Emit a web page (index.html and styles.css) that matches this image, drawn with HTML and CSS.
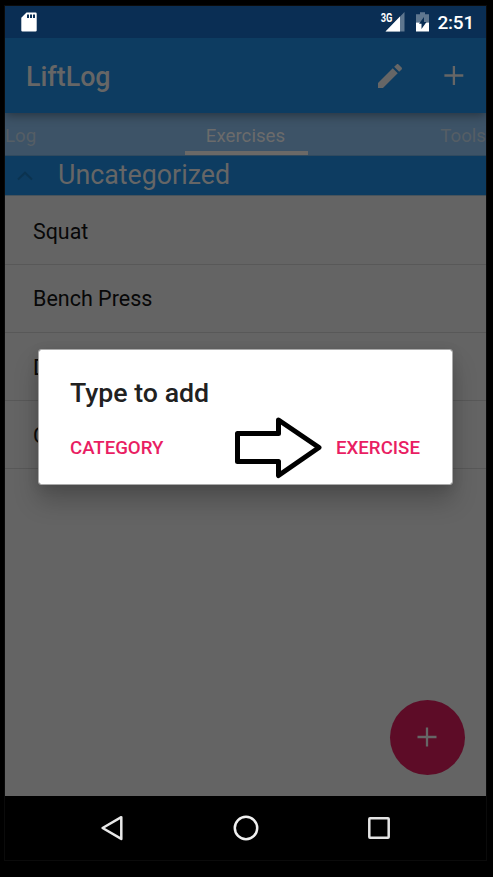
FILE: index.html
```html
<!DOCTYPE html>
<html lang="en">
<head>
<meta charset="utf-8">
<title>LiftLog</title>
<link rel="stylesheet" href="styles.css">
</head>
<body>
<div class="phone">
  <header class="status">
    <svg class="sd" width="16" height="20" viewBox="0 0 16 20"><path fill="#fff" fill-rule="evenodd" d="M5.500.500H14.500Q15.700.500 15.700 1.700V18.500Q15.700 19.600 14.500 19.600H1.500Q.300 19.600 .300 18.500V5.700ZM6 2.500V6H8V2.500ZM9 2.500V6H11V2.500ZM12 2.500V6H14V2.500Z"/></svg>
    <div class="signal">
      <span class="net">3G</span>
      <svg width="20" height="20" viewBox="0 0 20 20"><path fill="#fff" fill-opacity=".35" d="M19.500 0V19.500H.5Z"/><path fill="#fff" d="M15 4.500V19.500H.5Z"/></svg>
    </div>
    <svg class="battery" width="13" height="20" viewBox="0 0 13 20"><path fill="#fff" fill-opacity=".35" d="M4 .3H9V2.300H13V10.500H0V2.300H4Z"/><path fill="#fff" d="M0 10.500H13V19.500H0Z"/><path fill="#0a2e54" d="M8 5V10H10.500L5.500 17V11.700H3Z"/></svg>
    <span class="clock">2:51</span>
  </header>
  <div class="appbar">
    <h1>LiftLog</h1>
    <svg class="pencil" width="32" height="32" viewBox="0 0 24 24"><path fill="#666" d="M3 17.250V21h3.750L17.810 9.940l-3.750-3.750L3 17.250zM20.710 7.040c.39-.39.39-1.020 0-1.410l-2.340-2.340c-.39-.39-1.020-.39-1.410 0l-1.830 1.830 3.750 3.750 1.830-1.830z"/></svg>
    <svg class="plus" width="20" height="20" viewBox="0 0 20 20"><path stroke="#666" stroke-width="2.300" d="M.4 9.500H19.300M9.900 0V19"/></svg>
  </div>
  <nav class="tabs">
    <span class="tab first">Log</span>
    <span class="tab active">Exercises</span>
    <span class="tab last">Tools</span>
  </nav>
  <div class="group">
    <svg width="16" height="10" viewBox="0 0 16 10"><path fill="none" stroke="#0b3350" stroke-width="2" d="M1 8.500L8 1.700L15 8.500"/></svg>
    <h2>Uncategorized</h2>
  </div>
  <main class="list">
    <div class="row">Squat</div>
    <div class="row press">Bench Press</div>
    <div class="row">Deadlift</div>
    <div class="row">Curl</div>
  </main>
  <div class="fab"><svg width="20" height="20" viewBox="0 0 20 20"><path stroke="#666" stroke-width="2.300" d="M.5 10H19.500M10 .5V19.500"/></svg></div>
  <section class="dialog">
    <h3>Type to add</h3>
    <div class="actions"><span class="category">CATEGORY</span><span>EXERCISE</span></div>
    <svg class="arrow" width="92" height="66" viewBox="0 0 92 66"><path fill="#fff" stroke="#000" stroke-width="5" stroke-linejoin="round" d="M6.500 18.500H47.500V5L88 32.500L47.500 60.500V46.500H6.500Z"/></svg>
  </section>
  <footer class="navbar">
    <svg width="28" height="28" viewBox="0 0 28 28"><path fill="none" stroke="#e8e8e8" stroke-width="2.500" stroke-linejoin="round" d="M23.300 3.200V24.900L4.600 14Z"/></svg>
    <svg width="28" height="28" viewBox="0 0 28 28"><circle cx="14" cy="14" r="11.200" fill="none" stroke="#f0f0f0" stroke-width="2.500"/></svg>
    <svg width="28" height="28" viewBox="0 0 28 28"><rect x="4.300" y="4.300" width="19.400" height="19.400" rx=".7" fill="none" stroke="#e4e4e4" stroke-width="2.500"/></svg>
  </footer>
</div>
</body>
</html>
```

FILE: styles.css
```css
* { box-sizing: border-box; }
body {
  margin: 0;
  padding: 6px 7px 0 5px;
  height: 877px;
  overflow: hidden;
  background: #000;
  font-family: Roboto, "Liberation Sans", sans-serif;
}
h1, h2, h3 { margin: 0; }
svg { display: block; flex: none; }
.phone {
  position: relative;
  display: flex;
  flex-direction: column;
  width: 481px;
  height: 854px;
  background: #646464;
  box-shadow: 0 0 0 1px #0b0b0b;
}
.status {
  display: flex;
  align-items: center;
  height: 32px;
  padding: 0 12px 0 16px;
  background: #0a2e54;
  color: #fff;
}
.signal { display: flex; margin-left: auto; }
.net {
  margin-right: -8px;
  font-size: 12px;
  font-weight: 700;
  line-height: 12px;
  transform: scaleX(.78);
  transform-origin: 80% 0;
}
.battery { margin: 0 8px 0 11px; }
.clock {
  font-size: 19px;
  font-weight: 500;
  line-height: 32px;
  margin-top: 2px;
  letter-spacing: -.2px;
}
.appbar {
  position: relative;
  z-index: 1;
  display: flex;
  align-items: center;
  height: 75px;
  padding: 0 22px 0 21px;
  background: #0d3c61;
  box-shadow: 0 2px 10px rgba(0, 0, 0, .4);
  clip-path: inset(0 0 -14px 0);
}
.appbar h1 { color: #666; font-size: 26.800px; font-weight: 500; line-height: 32px; margin-top: 3px; }
.pencil { margin-left: auto; }
.plus { margin-left: 38px; }
.tabs {
  display: grid;
  grid-template-columns: 179px 123px 179px;
  height: 43px;
  background: #3d5367;
  border-bottom: 1px solid #304a5f;
  font-size: 18.700px;
  line-height: 46px;
  color: #555e65;
}
.tab { height: 42px; }
.tab.first { text-align: left; }
.tab.last { text-align: right; }
.tab.active {
  margin-left: .5px;
  margin-right: -.5px;
  padding-right: 1px;
  text-align: center;
  color: #6b6b6b;
  border-bottom: 4px solid #6b6967;
}
.group {
  display: flex;
  align-items: center;
  height: 40px;
  padding-left: 12px;
  background: #0d3c61;
  border-bottom: 1px solid #48545c;
}
.group h2 {
  margin: -2px 0 0 25px;
  color: #666;
  font-size: 26.800px;
  font-weight: 400;
  line-height: 38px;
}
.list { flex: 1; }
.row {
  height: 68px;
  padding-left: 28px;
  border-bottom: 1px solid #585858;
  color: #080808;
  font-size: 21.400px;
  line-height: 69px;
}
.row:first-child { height: 69px; line-height: 71px; }
.row.press { line-height: 68px; font-size: 21.500px; }
.fab {
  position: absolute;
  right: 21.500px;
  top: 693.500px;
  display: flex;
  align-items: center;
  justify-content: center;
  width: 75px;
  height: 75px;
  border-radius: 50%;
  background: #5d0c27;
}
.dialog {
  position: absolute;
  left: 33px;
  top: 343px;
  z-index: 2;
  width: 415px;
  height: 136px;
  padding: 27px 32px 0 31px;
  border: 1px solid #aaa;
  border-radius: 3px;
  background: #fff;
  background-clip: padding-box;
  box-shadow: 0 16px 24px rgba(0, 0, 0, .22), 0 2px 12px rgba(0, 0, 0, .1);
}
.dialog h3 { color: #212121; font-size: 26.700px; font-weight: 500; line-height: 32px; }
.actions {
  display: flex;
  justify-content: space-between;
  margin-top: 27px;
  color: #e91e63;
  font-size: 18.700px;
  font-weight: 500;
  line-height: 24px;
}
.category { letter-spacing: -.05px; }
.arrow { position: absolute; left: 192px; top: 65px; }
.navbar {
  display: flex;
  justify-content: center;
  align-items: center;
  gap: 105.500px;
  height: 64px;
  background: #000;
}
```
